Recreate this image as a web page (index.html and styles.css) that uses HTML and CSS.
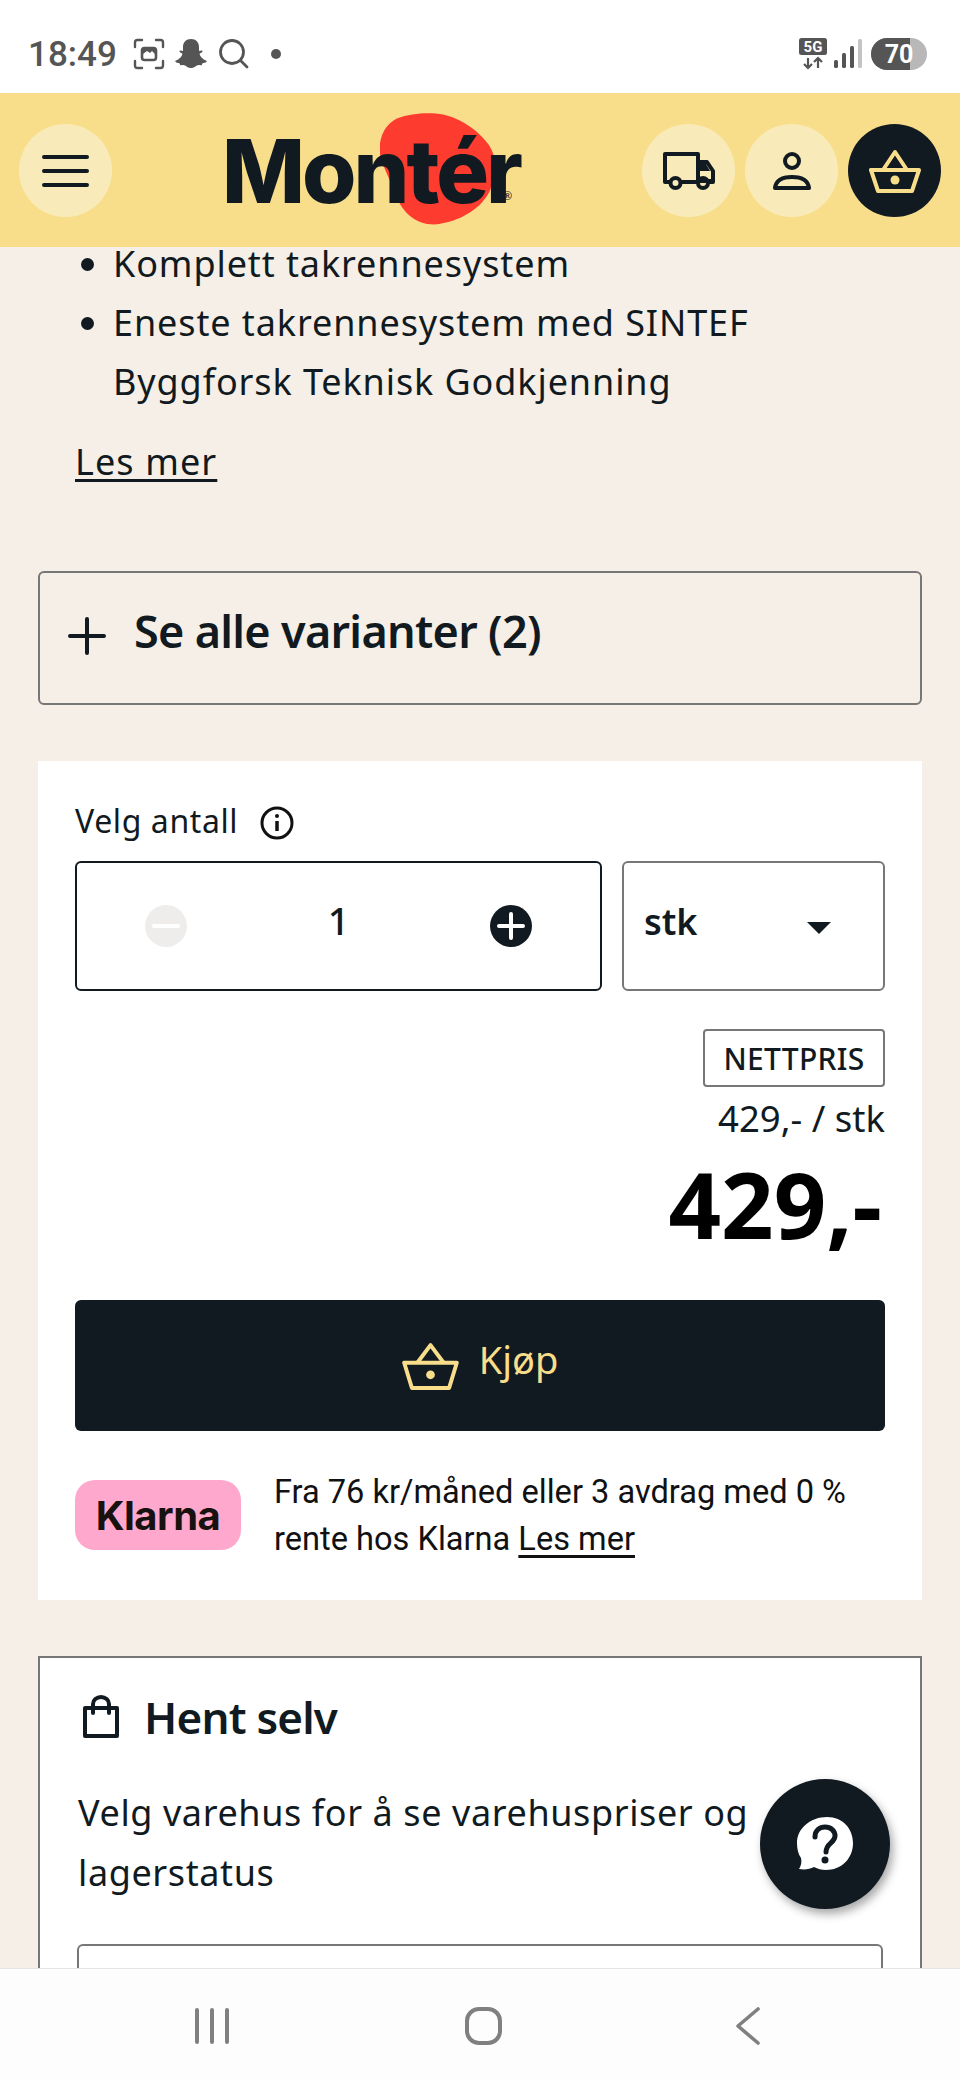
FILE: index.html
```html
<!DOCTYPE html>
<html>
<head>
    <title>Montér</title>
    <link rel="stylesheet" href="styles.css">
</head>
<body>
    <div class="screen">
        <!-- Phone status bar -->
        <div class="status_bar">
            <span class="clock">18:49</span>
            <svg class="st_scan" viewBox="0 0 32 32" fill="none" stroke="#555" stroke-width="2.4" stroke-linecap="round">
                <path d="M2 9V4.500Q2 2 4.500 2H9M23 2h4.500Q30 2 30 4.500V9M30 23v4.500Q30 30 27.500 30H23M9 30H4.500Q2 30 2 27.500V23"/>
                <rect x="9" y="10" width="14" height="12" rx="2.500" stroke-width="2.600"/>
                <path d="M10 16l4-3 3 2 2-2 3 3v-5H10z" fill="#555" stroke="none"/>
            </svg>
            <svg class="st_ghost" viewBox="0 0 32 30" fill="#555">
                <path d="M16 0c5 0 8 3.500 8 8v4l2.500-.5c1 0 1.500 1 .5 1.800l-2.500 1.500c.8 3 3 5.500 7 7 .6.5.2 1.300-.8 1.600l-3.200.8-.8 2-3.200-.2c-2 .3-4 3-7.500 3s-5.500-2.700-7.500-3l-3.200.2-.8-2-3.200-.8c-1-.3-1.400-1.100-.8-1.600 4-1.500 6.200-4 7-7L5 13.300c-1-.8-.5-1.800.5-1.800L8 12V8c0-4.500 3-8 8-8z"/>
            </svg>
            <svg class="st_search" viewBox="0 0 30 30" fill="none" stroke="#555" stroke-width="2.800" stroke-linecap="round">
                <circle cx="13" cy="13" r="11.500"/>
                <path d="M21.500 21.500L28 28"/>
            </svg>
            <span class="st_dot"></span>
            <div class="st_right">
                <svg class="st_5g" viewBox="0 0 28 32">
                    <rect x="0" y="0" width="28" height="17" rx="2.500" fill="#555"/>
                    <text x="14" y="14" text-anchor="middle" class="st_5g_text">5G</text>
                    <path d="M9 20v10M5 26l4 4 4-4M19 30V20M15 24l4-4 4 4" fill="none" stroke="#555" stroke-width="2.200"/>
                </svg>
                <svg class="st_signal" viewBox="0 0 28 30">
                    <rect x="0" y="21" width="4" height="8" rx="1.500" fill="#555"/>
                    <rect x="8" y="14" width="4" height="15" rx="1.500" fill="#555"/>
                    <rect x="16" y="7" width="4" height="22" rx="1.500" fill="#555"/>
                    <rect x="24" y="0" width="4" height="29" rx="1.500" fill="#c4c4c4"/>
                </svg>
                <div class="battery"><span class="battery_fill"></span><span class="battery_num">70</span></div>
            </div>
        </div>

        <!-- Yellow site header -->
        <header class="site_header">
            <button class="round_btn">
                <svg width="47" height="34" viewBox="0 0 47 34" fill="none" stroke="#111a20" stroke-width="4" stroke-linecap="round">
                    <path d="M2 3h43M2 17h43M2 31h43"/>
                </svg>
            </button>
            <div class="logo">
                <svg class="logo_blob" viewBox="0 0 117 112">
                    <path d="M17 5C30 0 45-1 56 0C80 2 100 18 110 32C118 44 118 60 112 75C105 95 80 110 55 112C35 112 22 100 14 78C8 60-3 45 0 30C2 17 9 9 17 5Z" fill="#fd3b2f"/>
                </svg>
                <span class="logo_text">Montér</span>
                <span class="logo_reg">®</span>
            </div>
            <div class="header_actions">
                <button class="round_btn">
                    <svg width="52" height="38" viewBox="0 0 52 38" fill="none" stroke="#111a20" stroke-width="4" stroke-linejoin="round">
                        <path d="M7 30H2V2h33v28H18"/>
                        <path d="M35 10h9l6 9v11h-4M35 30h-1"/>
                        <path d="M36 12h7l4 7H36z" fill="#111a20" stroke="none"/>
                        <path d="M35 27h15v4H35z" fill="#111a20" stroke="none"/>
                        <circle cx="12.500" cy="31" r="5"/>
                        <circle cx="40" cy="31" r="5"/>
                    </svg>
                </button>
                <button class="round_btn">
                    <svg width="38" height="38" viewBox="0 0 38 38" fill="none" stroke="#111a20" stroke-width="4">
                        <circle cx="19" cy="9" r="7"/>
                        <path d="M2 36C3 28 10 25 19 25C28 25 35 28 36 36Z" stroke-linejoin="round"/>
                    </svg>
                </button>
                <button class="round_btn round_btn_dark">
                    <svg width="52" height="44" viewBox="0 0 52 44" fill="none" stroke="#f8de8b" stroke-width="4" stroke-linejoin="round">
                        <path d="M2 21H50L43 42H9Z"/>
                        <path d="M14 21L26 3L38 21"/>
                        <circle cx="26" cy="31" r="4.500" fill="#f8de8b" stroke="none"/>
                    </svg>
                </button>
            </div>
        </header>

        <main class="content">
            <ul class="usp_list">
                <li>Komplett takrennesystem</li>
                <li>Eneste takrennesystem med SINTEF Byggforsk Teknisk Godkjenning</li>
            </ul>
            <a class="read_more">Les mer</a>

            <div class="variants_box">
                <svg width="38" height="38" viewBox="0 0 38 38" stroke="#111a20" stroke-width="4" stroke-linecap="round">
                    <path d="M19 2v34M2 19h34"/>
                </svg>
                <span>Se alle varianter (2)</span>
            </div>

            <section class="buy_card">
                <div class="qty_label">
                    <span>Velg antall</span>
                    <svg width="34" height="34" viewBox="0 0 34 34" fill="none" stroke="#111" stroke-width="3">
                        <circle cx="17" cy="17" r="15"/>
                        <path d="M17 15v10" stroke-width="3.500"/>
                        <circle cx="17" cy="10" r="2" fill="#111" stroke="none"/>
                    </svg>
                </div>
                <div class="qty_row">
                    <div class="qty_box">
                        <svg width="42" height="42" viewBox="0 0 42 42">
                            <circle cx="21" cy="21" r="21" fill="#efedec"/>
                            <path d="M9 21h24" stroke="#fff" stroke-width="4" stroke-linecap="round"/>
                        </svg>
                        <span class="qty_num">1</span>
                        <svg width="42" height="42" viewBox="0 0 42 42">
                            <circle cx="21" cy="21" r="21" fill="#111a20"/>
                            <path d="M9 21h24M21 9v24" stroke="#fff" stroke-width="4" stroke-linecap="round"/>
                        </svg>
                    </div>
                    <div class="unit_box">
                        <span class="unit_name">stk</span>
                        <span class="caret"></span>
                    </div>
                </div>
                <div class="price_block">
                    <span class="price_tag">NETTPRIS</span>
                    <span class="price_unit">429,- / stk</span>
                    <span class="price_total">429,-</span>
                </div>
                <button class="buy_btn">
                    <svg width="57" height="50" viewBox="0 0 52 44" fill="none" stroke="#f8de8b" stroke-width="3.600" stroke-linejoin="round">
                        <path d="M2 19H50L43 42H9Z"/>
                        <path d="M14 19L26 3L38 19"/>
                        <circle cx="26" cy="30" r="4" fill="#f8de8b" stroke="none"/>
                    </svg>
                    <span class="buy_label">Kjøp</span>
                </button>
                <div class="klarna_row">
                    <div class="klarna_badge">Klarna</div>
                    <p class="klarna_text">Fra 76 kr/måned eller 3 avdrag med 0 % rente hos Klarna <a>Les mer</a></p>
                </div>
            </section>

            <section class="pickup_box">
                <div class="pickup_head">
                    <svg width="38" height="44" viewBox="0 0 38 44" fill="none" stroke="#111a20" stroke-width="4" stroke-linejoin="round">
                        <path d="M3 13H35V41H3Z"/>
                        <path d="M11 18V9a8 7 0 0 1 16 0v9" stroke-linecap="round"/>
                    </svg>
                    <h2>Hent selv</h2>
                </div>
                <p class="pickup_text">Velg varehus for å se varehuspriser og lagerstatus</p>
                <div class="store_select"></div>
            </section>
        </main>

        <button class="chat_btn">
            <svg width="58" height="54" viewBox="0 0 58 54">
                <path d="M31 0C47 0 57 12 57 26C57 42 45 53 30 53C25 53 22 52 18 50C14 52 9 53 3 52C5 49 6 45 5 41C2 37 1 31 1 26C1 11 15 0 31 0Z" fill="#fff"/>
                <path d="M19 20C19 13 24 10 29 10C35 10 39 14 39 19C39 26 30 26 30 35" fill="none" stroke="#111a20" stroke-width="5" stroke-linecap="round"/>
                <circle cx="29" cy="43" r="3.500" fill="#111a20"/>
            </svg>
        </button>

        <!-- Phone nav bar -->
        <nav class="nav_bar">
            <svg width="36" height="36" viewBox="0 0 36 36" stroke="#808080" stroke-width="4" stroke-linecap="round">
                <path d="M3 2v32M18 2v32M33 2v32"/>
            </svg>
            <svg width="37" height="38" viewBox="0 0 37 38" fill="none" stroke="#808080" stroke-width="4">
                <rect x="2" y="2" width="33" height="34" rx="12"/>
            </svg>
            <svg width="24" height="38" viewBox="0 0 24 38" fill="none" stroke="#808080" stroke-width="3.600" stroke-linecap="round" stroke-linejoin="round">
                <path d="M22 2L2 19L22 36"/>
            </svg>
        </nav>
    </div>
</body>
</html>
```

FILE: styles.css
```css
/* General page */
* {
    box-sizing: border-box;
}

body {
    margin: 0;
    font-family: 'Noto Sans', sans-serif;
    color: #111a20;
    background-color: #f5efe7;
}

button {
    border: none;
    padding: 0;
    font-family: inherit;
}

.screen {
    position: relative;
    display: flex;
    flex-direction: column;
    width: 960px;
    height: 2080px;
    overflow: hidden;
}

/* Status bar */
.status_bar {
    display: flex;
    align-items: center;
    flex: none;
    height: 93px;
    padding: 15px 33px 0 28px;
    background-color: #fff;
}

.clock {
    font-family: 'Roboto', sans-serif;
    font-weight: 500;
    font-size: 35px;
    color: #555;
}

.st_scan {
    width: 32px;
    height: 32px;
    margin-left: 16px;
}

.st_ghost {
    width: 32px;
    height: 30px;
    margin-left: 10px;
}

.st_search {
    width: 30px;
    height: 30px;
    margin-left: 12px;
}

.st_dot {
    width: 10px;
    height: 10px;
    margin-left: 22px;
    border-radius: 50%;
    background-color: #555;
}

.st_right {
    display: flex;
    align-items: center;
    margin-left: auto;
}

.st_5g {
    width: 28px;
    height: 32px;
}

.st_5g_text {
    font-family: 'Roboto', sans-serif;
    font-weight: 700;
    font-size: 15px;
    fill: #fff;
}

.st_signal {
    width: 28px;
    height: 30px;
    margin-left: 7px;
}

.battery {
    position: relative;
    display: flex;
    align-items: center;
    justify-content: center;
    width: 56px;
    height: 32px;
    margin-left: 9px;
    overflow: hidden;
    border-radius: 16px;
    background-color: #b8b8b8;
}

.battery_fill {
    position: absolute;
    left: 0;
    top: 0;
    bottom: 0;
    width: 39px;
    background-color: #555;
}

.battery_num {
    position: relative;
    font-family: 'Roboto', sans-serif;
    font-weight: 700;
    font-size: 25px;
    color: #fff;
}

/* Header */
.site_header {
    display: flex;
    align-items: center;
    flex: none;
    height: 154px;
    padding: 1px 19px 0;
    background-color: #f8de8b;
}

.round_btn {
    display: flex;
    align-items: center;
    justify-content: center;
    width: 93px;
    height: 93px;
    border-radius: 50%;
    background-color: #f9ebb9;
}

.round_btn_dark {
    background-color: #111a20;
}

.logo {
    position: relative;
    display: flex;
    margin-left: 110px;
    width: 296px;
}

.logo_blob {
    position: absolute;
    left: 158px;
    top: -14px;
    width: 116px;
    height: 112px;
}

.logo_text {
    position: relative;
    font-family: 'Inter', sans-serif;
    font-weight: 800;
    font-size: 88px;
    line-height: 88px;
    letter-spacing: -3px;
}

.logo_reg {
    position: absolute;
    left: 281px;
    top: 62px;
    font-size: 11px;
    line-height: 14px;
}

.header_actions {
    display: flex;
    gap: 10px;
    margin-left: auto;
}

/* Content */
.content {
    flex: 1;
    min-height: 0;
    overflow: hidden;
    padding: 0 38px;
}

.usp_list {
    margin: -13px 0 0;
    padding: 0 100px 0 75px;
    font-size: 36px;
    line-height: 59px;
    letter-spacing: 0.9px;
}

.read_more {
    display: block;
    margin: 21px 0 0 37px;
    font-size: 36px;
    line-height: 59px;
    letter-spacing: 1.1px;
    text-decoration: underline;
    text-underline-offset: 4px;
}

.variants_box {
    display: flex;
    align-items: center;
    gap: 28px;
    height: 134px;
    margin-top: 80px;
    padding: 0 28px 4px 28px;
    border: 2px solid #777;
    border-radius: 6px;
    font-weight: 600;
    font-size: 45px;
    letter-spacing: -0.7px;
}

.variants_box span {
    padding-bottom: 12px;
}

/* Buy card */
.buy_card {
    margin-top: 56px;
    padding: 36px 37px 0;
    height: 839px;
    background-color: #fff;
}

.qty_label {
    display: flex;
    align-items: center;
    gap: 22px;
    height: 46px;
    font-size: 32px;
    letter-spacing: 0.6px;
}

.qty_label svg {
    margin-top: 6px;
}

.qty_row {
    display: flex;
    gap: 20px;
    margin-top: 18px;
}

.qty_box {
    display: flex;
    align-items: center;
    justify-content: space-between;
    width: 527px;
    height: 130px;
    padding: 0 68px;
    border: 2px solid #111a20;
    border-radius: 6px;
}

.qty_num {
    padding-bottom: 13px;
    font-weight: 500;
    font-size: 38px;
}

.unit_box {
    display: flex;
    align-items: center;
    justify-content: space-between;
    width: 263px;
    height: 130px;
    padding: 0 52px 0 20px;
    border: 2px solid #777;
    border-radius: 6px;
    font-weight: 600;
    font-size: 36px;
}

.unit_name {
    padding-bottom: 10px;
}

.caret {
    width: 0;
    height: 0;
    margin-top: 4px;
    border-left: 12px solid transparent;
    border-right: 12px solid transparent;
    border-top: 12px solid #111a20;
}

.price_block {
    display: flex;
    flex-direction: column;
    align-items: flex-end;
    margin-top: 38px;
}

.price_tag {
    display: flex;
    align-items: center;
    justify-content: center;
    width: 182px;
    height: 58px;
    border: 2px solid #777;
    border-radius: 4px;
    font-weight: 500;
    font-size: 30px;
    letter-spacing: 0.3px;
}

.price_unit {
    margin-top: 7px;
    font-size: 36.5px;
    line-height: 48px;
}

.price_total {
    margin-top: 4px;
    padding-right: 3px;
    font-weight: 700;
    font-size: 92px;
    line-height: 116px;
    color: #000;
}

.buy_btn {
    display: flex;
    align-items: center;
    justify-content: center;
    gap: 20px;
    width: 810px;
    height: 131px;
    margin-top: 38px;
    border-radius: 6px;
    background-color: #111a20;
    color: #f8de8b;
    font-size: 38px;
}

.buy_label {
    padding-bottom: 14px;
}

.klarna_row {
    display: flex;
    gap: 33px;
    margin-top: 49px;
}

.klarna_badge {
    display: flex;
    align-items: center;
    justify-content: center;
    flex: none;
    width: 166px;
    height: 70px;
    border-radius: 20px;
    background-color: #ffa8cd;
    font-family: 'Inter', sans-serif;
    font-weight: 700;
    font-size: 40px;
    letter-spacing: -0.5px;
    color: #17120f;
}

.klarna_text {
    margin: -11px 0 0;
    font-family: 'Roboto', sans-serif;
    font-size: 32.6px;
    line-height: 47px;
    color: #111;
}

.klarna_text a {
    text-decoration: underline;
    text-underline-offset: 5px;
}

/* Pick up box */
.pickup_box {
    margin-top: 56px;
    height: 400px;
    padding: 0 37px;
    border: 2px solid #777;
    background-color: #fff;
}

.pickup_head {
    display: flex;
    align-items: center;
    gap: 24px;
    margin-top: 29px;
    padding-left: 5px;
}

.pickup_head h2 {
    margin: 0;
    font-weight: 600;
    font-size: 44px;
    line-height: 60px;
    letter-spacing: -0.8px;
}

.pickup_text {
    width: 724px;
    margin: 36px 0 0 1px;
    font-size: 36px;
    line-height: 60px;
    letter-spacing: 0.6px;
}

.store_select {
    height: 100px;
    margin-top: 41px;
    border: 2px solid #777;
    border-radius: 6px;
}

/* Chat button floats over the page */
.chat_btn {
    position: absolute;
    left: 760px;
    top: 1779px;
    display: flex;
    align-items: center;
    justify-content: center;
    width: 130px;
    height: 130px;
    border-radius: 50%;
    background-color: #111a20;
    box-shadow: 3px 5px 10px rgba(0, 0, 0, 0.35);
}

/* Nav bar */
.nav_bar {
    display: flex;
    align-items: center;
    justify-content: space-between;
    flex: none;
    height: 112px;
    padding: 3px 200px 0 194px;
    border-top: 1px solid #e4e4e4;
    background-color: #fdfdfd;
}
```
